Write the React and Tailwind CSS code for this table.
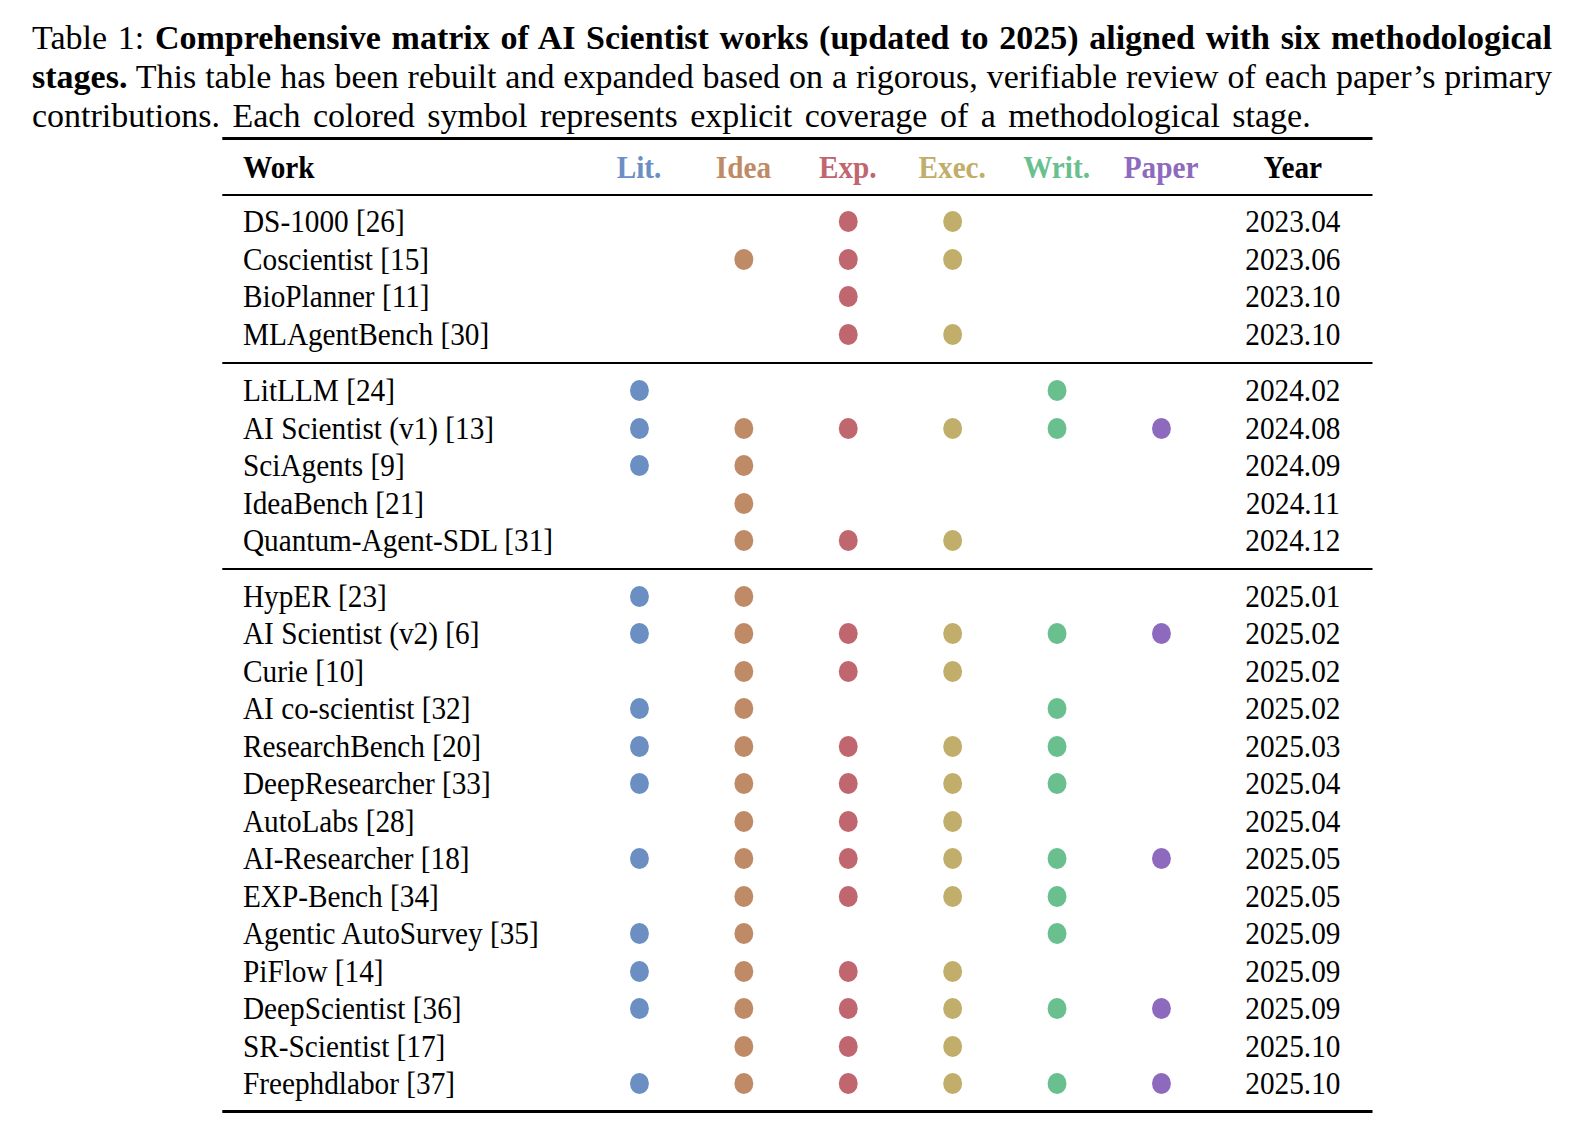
const STAGES = [
  { key: 'lit', label: 'Lit.', color: '#6b8fc3' },
  { key: 'idea', label: 'Idea', color: '#bf8a66' },
  { key: 'exp', label: 'Exp.', color: '#c0666f' },
  { key: 'exec', label: 'Exec.', color: '#c0ae6a' },
  { key: 'writ', label: 'Writ.', color: '#69bf8e' },
  { key: 'paper', label: 'Paper', color: '#8e6abf' },
];

const ALL = ['lit', 'idea', 'exp', 'exec', 'writ', 'paper'];

const GROUPS = [
  {
    pad: 'pt-[6px] pb-[10px]',
    rows: [
      ['DS-1000 [26]', ['exp', 'exec'], '2023.04'],
      ['Coscientist [15]', ['idea', 'exp', 'exec'], '2023.06'],
      ['BioPlanner [11]', ['exp'], '2023.10'],
      ['MLAgentBench [30]', ['exp', 'exec'], '2023.10'],
    ],
  },
  {
    pad: 'pt-[7px] pb-[9px]',
    rows: [
      ['LitLLM [24]', ['lit', 'writ'], '2024.02'],
      ['AI Scientist (v1) [13]', ALL, '2024.08'],
      ['SciAgents [9]', ['lit', 'idea'], '2024.09'],
      ['IdeaBench [21]', ['idea'], '2024.11'],
      ['Quantum-Agent-SDL [31]', ['idea', 'exp', 'exec'], '2024.12'],
    ],
  },
  {
    pad: 'pt-[7px] pb-[8px]',
    rows: [
      ['HypER [23]', ['lit', 'idea'], '2025.01'],
      ['AI Scientist (v2) [6]', ALL, '2025.02'],
      ['Curie [10]', ['idea', 'exp', 'exec'], '2025.02'],
      ['AI co-scientist [32]', ['lit', 'idea', 'writ'], '2025.02'],
      ['ResearchBench [20]', ['lit', 'idea', 'exp', 'exec', 'writ'], '2025.03'],
      ['DeepResearcher [33]', ['lit', 'idea', 'exp', 'exec', 'writ'], '2025.04'],
      ['AutoLabs [28]', ['idea', 'exp', 'exec'], '2025.04'],
      ['AI-Researcher [18]', ALL, '2025.05'],
      ['EXP-Bench [34]', ['idea', 'exp', 'exec', 'writ'], '2025.05'],
      ['Agentic AutoSurvey [35]', ['lit', 'idea', 'writ'], '2025.09'],
      ['PiFlow [14]', ['lit', 'idea', 'exp', 'exec'], '2025.09'],
      ['DeepScientist [36]', ALL, '2025.09'],
      ['SR-Scientist [17]', ['idea', 'exp', 'exec'], '2025.10'],
      ['Freephdlabor [37]', ALL, '2025.10'],
    ],
  },
];

const COLS = 'grid grid-cols-[405px_116px_116px_116px_116px_116px_116px_177px] items-center';

function Row({ name, stages, year }) {
  return (
    <div className={`${COLS} h-[37.5px]`}>
      <span className="pl-[23px]">{name}</span>
      {STAGES.map((s) => (
        <span key={s.key} className="flex justify-center">
          {stages.includes(s.key) && (
            <span className="block h-[21px] w-[21px] rounded-full" style={{ backgroundColor: s.color }} />
          )}
        </span>
      ))}
      <span className="text-center">{year}</span>
    </div>
  );
}

export default function App() {
  return (
    <div className="w-[1578px] h-[1128px] overflow-hidden bg-white text-black font-['Liberation_Serif','Times_New_Roman',serif]">
      {/* Caption */}
      <div className="ml-[32px] w-[1520px] pt-[18px] text-[34px] leading-[39px]">
        <div className="text-justify [text-align-last:justify] whitespace-nowrap">
          Table 1: <b>Comprehensive matrix of AI Scientist works (updated to 2025) aligned with six methodological</b>
        </div>
        <div className="text-justify [text-align-last:justify] whitespace-nowrap">
          <b>stages.</b> This table has been rebuilt and expanded based on a rigorous, verifiable review of each paper’s primary
        </div>
        <div className="whitespace-nowrap [word-spacing:4px]">
          contributions. Each colored symbol represents explicit coverage of a methodological stage.
        </div>
      </div>

      {/* Table (set in a horizontally condensed face) */}
      <div className="w-[1753px] origin-top-left scale-x-[0.9] text-[32.5px] leading-[39px]">
        <div className="ml-[247px] mt-[2px] w-[1278px]">
          <div className="h-[3px] bg-black" />
          <div className={`${COLS} h-[54px] font-bold`}>
            <span className="pl-[23px]">Work</span>
            {STAGES.map((s) => (
              <span key={s.key} className="text-center" style={{ color: s.color }}>
                {s.label}
              </span>
            ))}
            <span className="text-center">Year</span>
          </div>
          <div className="h-[2px] bg-black" />
          {GROUPS.map((g, gi) => (
            <div key={gi}>
              <div className={g.pad}>
                {g.rows.map(([name, stages, year]) => (
                  <Row key={name} name={name} stages={stages} year={year} />
                ))}
              </div>
              <div className={gi === GROUPS.length - 1 ? 'h-[3px] bg-black' : 'h-[2px] bg-black'} />
            </div>
          ))}
        </div>
      </div>
    </div>
  );
}
